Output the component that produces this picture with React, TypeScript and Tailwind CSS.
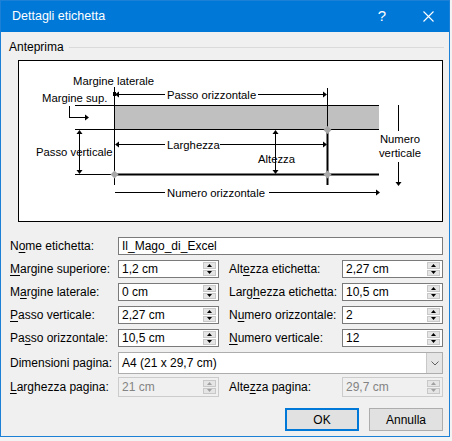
import React from 'react';

const FONT = "font-['Liberation_Sans',Arial,sans-serif]";

function Key({ label, k }: { label: string; k: number }) {
  return (
    <>
      {label.slice(0, k)}
      <span className="underline underline-offset-2">{label[k]}</span>
      {label.slice(k + 1)}
    </>
  );
}

function Spin({ value, disabled = false, h = 'h-[18px]' }: { value: string; disabled?: boolean; h?: string }) {
  return (
    <div
      className={`w-[101px] ${h} flex items-center border ${
        disabled ? 'border-[#cccccc] bg-[#f0f0f0] text-[#838383]' : 'border-[#7a7a7a] bg-white text-black'
      }`}
    >
      <span className="flex-1 pl-[3px] leading-none">{value}</span>
      <div className="w-[13px] h-[14px] mr-[2px] flex flex-col gap-px">
        <div className="flex-1 bg-[#e5e5e5] border border-[#c8c8c8] flex items-center justify-center">
          <svg width="5" height="3" viewBox="0 0 5 3">
            <path d="M2.5 0 L5 3 L0 3 Z" fill={disabled ? '#a0a0a0' : '#000'} />
          </svg>
        </div>
        <div className="flex-1 bg-[#e5e5e5] border border-[#c8c8c8] flex items-center justify-center">
          <svg width="5" height="3" viewBox="0 0 5 3">
            <path d="M0 0 L5 0 L2.5 3 Z" fill={disabled ? '#a0a0a0' : '#000'} />
          </svg>
        </div>
      </div>
    </div>
  );
}

function Preview() {
  const arrowL = (x: number, y: number) => `M${x} ${y} L${x + 4} ${y - 3} L${x + 4} ${y + 3} Z`;
  const arrowR = (x: number, y: number) => `M${x} ${y} L${x - 4} ${y - 3} L${x - 4} ${y + 3} Z`;
  const arrowU = (x: number, y: number) => `M${x} ${y} L${x - 3} ${y + 4} L${x + 3} ${y + 4} Z`;
  const arrowD = (x: number, y: number) => `M${x} ${y} L${x - 3} ${y - 4} L${x + 3} ${y - 4} Z`;
  const diamond = (x: number, y: number) => `M${x} ${y - 4} L${x + 4} ${y} L${x} ${y + 4} L${x - 4} ${y} Z`;
  return (
    <svg className="block w-full h-full" viewBox="19 61 423 160" fontFamily="Liberation Sans, Arial, sans-serif" fontSize="11.3">
      {/* label sheet */}
      <rect x="114" y="105" width="265" height="24" fill="#c0c0c0" />
      <line x1="75" y1="105.5" x2="379" y2="105.5" stroke="#000" />
      <line x1="75" y1="129.5" x2="379" y2="129.5" stroke="#000" />
      <line x1="75" y1="174.5" x2="114" y2="174.5" stroke="#000" />
      <line x1="114" y1="174.5" x2="379" y2="174.5" stroke="#000" strokeWidth="2" />
      <line x1="114.5" y1="87" x2="114.5" y2="185" stroke="#000" />
      <line x1="327.5" y1="88" x2="327.5" y2="129" stroke="#000" />
      <line x1="327.5" y1="129" x2="327.5" y2="185" stroke="#000" strokeWidth="2" />
      <path d={diamond(327.5, 130)} fill="#a8a8a8" />
      <path d={diamond(327.5, 174.5)} fill="#a8a8a8" />
      <path d={diamond(114.5, 174.5)} fill="#a8a8a8" />
      <rect x="113" y="92" width="3" height="4" fill="#000" />

      {/* margine sup */}
      <line x1="69.5" y1="106" x2="69.5" y2="118" stroke="#000" />
      <line x1="69" y1="117.5" x2="86" y2="117.5" stroke="#000" />
      <path d={arrowR(89, 117.5)} fill="#000" />

      {/* passo verticale */}
      <line x1="79.5" y1="133" x2="79.5" y2="171" stroke="#000" />
      <path d={arrowU(79.5, 130)} fill="#000" />
      <path d={arrowD(79.5, 174)} fill="#000" />

      {/* passo orizzontale */}
      <line x1="118" y1="94.5" x2="165" y2="94.5" stroke="#000" />
      <line x1="258" y1="94.5" x2="324" y2="94.5" stroke="#000" />
      <path d={arrowL(115, 94.5)} fill="#000" />
      <path d={arrowR(327, 94.5)} fill="#000" />

      {/* larghezza */}
      <line x1="118" y1="144.5" x2="165" y2="144.5" stroke="#000" />
      <line x1="220" y1="144.5" x2="324" y2="144.5" stroke="#000" />
      <path d={arrowL(115, 144.5)} fill="#000" />
      <path d={arrowR(327, 144.5)} fill="#000" />

      {/* altezza */}
      <line x1="275.5" y1="133" x2="275.5" y2="171" stroke="#000" />
      <path d={arrowU(275.5, 130)} fill="#000" />
      <path d={arrowD(275.5, 174)} fill="#000" />

      {/* numero verticale */}
      <line x1="398.5" y1="105" x2="398.5" y2="131" stroke="#000" />
      <line x1="398.5" y1="162" x2="398.5" y2="183" stroke="#000" />
      <path d={arrowD(398.5, 186)} fill="#000" />

      {/* numero orizzontale */}
      <line x1="115" y1="192.5" x2="165" y2="192.5" stroke="#000" />
      <line x1="269" y1="192.5" x2="377" y2="192.5" stroke="#000" />
      <path d={arrowR(380, 192.5)} fill="#000" />

      <text x="73" y="85">Margine laterale</text>
      <text x="42" y="102">Margine sup.</text>
      <text x="167" y="98.5">Passo orizzontale</text>
      <text x="36" y="156">Passo verticale</text>
      <text x="167" y="148.5">Larghezza</text>
      <text x="258" y="163">Altezza</text>
      <text x="400" y="143" textAnchor="middle">Numero</text>
      <text x="400" y="157" textAnchor="middle">verticale</text>
      <text x="167" y="196.5">Numero orizzontale</text>
    </svg>
  );
}

function Row({ children, h = 'h-[18px]', mt = 'mt-[5px]' }: { children: React.ReactNode; h?: string; mt?: string }) {
  return <div className={`flex items-center ${h} ${mt}`}>{children}</div>;
}

export default function App() {
  return (
    <div className={`w-[452px] h-[441px] bg-[#f3f3f3] text-[12px] text-black ${FONT}`}>
      <div className="w-[450px] h-[437px] border border-[#1c80d6] bg-[#f0f0f0] flex flex-col">
        {/* title bar */}
        <div className="h-[31px] bg-[#0078d7] text-white flex items-center pl-[11px] shrink-0">
          <span className="text-[12.5px] flex-1">Dettagli etichetta</span>
          <span className="w-[46px] text-center text-[15px] font-light">?</span>
          <div className="w-[46px] flex justify-center mr-[-2px]">
            <svg width="11" height="11" viewBox="0 0 11 11">
              <path d="M0.5 0.5 L10.5 10.5 M10.5 0.5 L0.5 10.5" stroke="#fff" strokeWidth="1.1" />
            </svg>
          </div>
        </div>

        {/* anteprima */}
        <div className="mt-[8px] h-[14px] flex items-center pl-[8px] pr-[5px]">
          <span>Anteprima</span>
          <div className="flex-1 h-px bg-[#dadada] ml-[5px]" />
        </div>
        <div className="mt-[6px] ml-[17px] w-[425px] h-[162px] border border-black bg-white shrink-0">
          <Preview />
        </div>

        {/* form */}
        <div className="mt-[15px] pl-[9px] flex flex-col">
          <Row mt="mt-0">
            <span className="w-[108px]">
              <Key label="Nome etichetta:" k={1} />
            </span>
            <div className="w-[325px] h-full border border-[#7a7a7a] bg-white flex items-center pl-[3px]">Il_Mago_di_Excel</div>
          </Row>
          <Row>
            <span className="w-[108px]">
              <Key label="Margine superiore:" k={0} />
            </span>
            <Spin value="1,2 cm" />
            <span className="w-[113px] ml-[10px]">
              <Key label="Altezza etichetta:" k={3} />
            </span>
            <Spin value="2,27 cm" />
          </Row>
          <Row>
            <span className="w-[108px]">
              <Key label="Margine laterale:" k={1} />
            </span>
            <Spin value="0 cm" />
            <span className="w-[113px] ml-[10px]">
              <Key label="Larghezza etichetta:" k={4} />
            </span>
            <Spin value="10,5 cm" />
          </Row>
          <Row>
            <span className="w-[108px]">
              <Key label="Passo verticale:" k={0} />
            </span>
            <Spin value="2,27 cm" />
            <span className="w-[113px] ml-[10px]">
              <Key label="Numero orizzontale:" k={1} />
            </span>
            <Spin value="2" />
          </Row>
          <Row>
            <span className="w-[108px]">
              <Key label="Passo orizzontale:" k={2} />
            </span>
            <Spin value="10,5 cm" />
            <span className="w-[113px] ml-[10px]">
              <Key label="Numero verticale:" k={0} />
            </span>
            <Spin value="12" />
          </Row>
          <Row h="h-[22px]">
            <span className="w-[108px]">Dimensioni pagina:</span>
            <div className="w-[325px] h-full border border-[#adadad] bg-white flex items-center">
              <span className="flex-1 pl-[3px]">A4 (21 x 29,7 cm)</span>
              <div className="w-[16px] h-full bg-[#e5e5e5] border-l border-[#c8c8c8] flex items-center justify-center">
                <svg width="8" height="5" viewBox="0 0 8 5">
                  <path d="M0.5 0.5 L4 4 L7.5 0.5" stroke="#606060" fill="none" strokeWidth="1" />
                </svg>
              </div>
            </div>
          </Row>
          <Row h="h-[20px]" mt="mt-[3px]">
            <span className="w-[108px]">
              <Key label="Larghezza pagina:" k={0} />
            </span>
            <Spin value="21 cm" disabled h="h-[20px]" />
            <span className="w-[113px] ml-[10px]">
              <Key label="Altezza pagina:" k={4} />
            </span>
            <Spin value="29,7 cm" disabled h="h-[20px]" />
          </Row>
          <div className="mt-[11px] flex justify-end gap-[10px] pr-[6px]">
            <button className="w-[74px] h-[23px] bg-[#e1e1e1] border-2 border-[#0078d7] flex items-center justify-center">OK</button>
            <button className="w-[74px] h-[23px] bg-[#e1e1e1] border border-[#adadad] flex items-center justify-center">Annulla</button>
          </div>
        </div>
      </div>
    </div>
  );
}
